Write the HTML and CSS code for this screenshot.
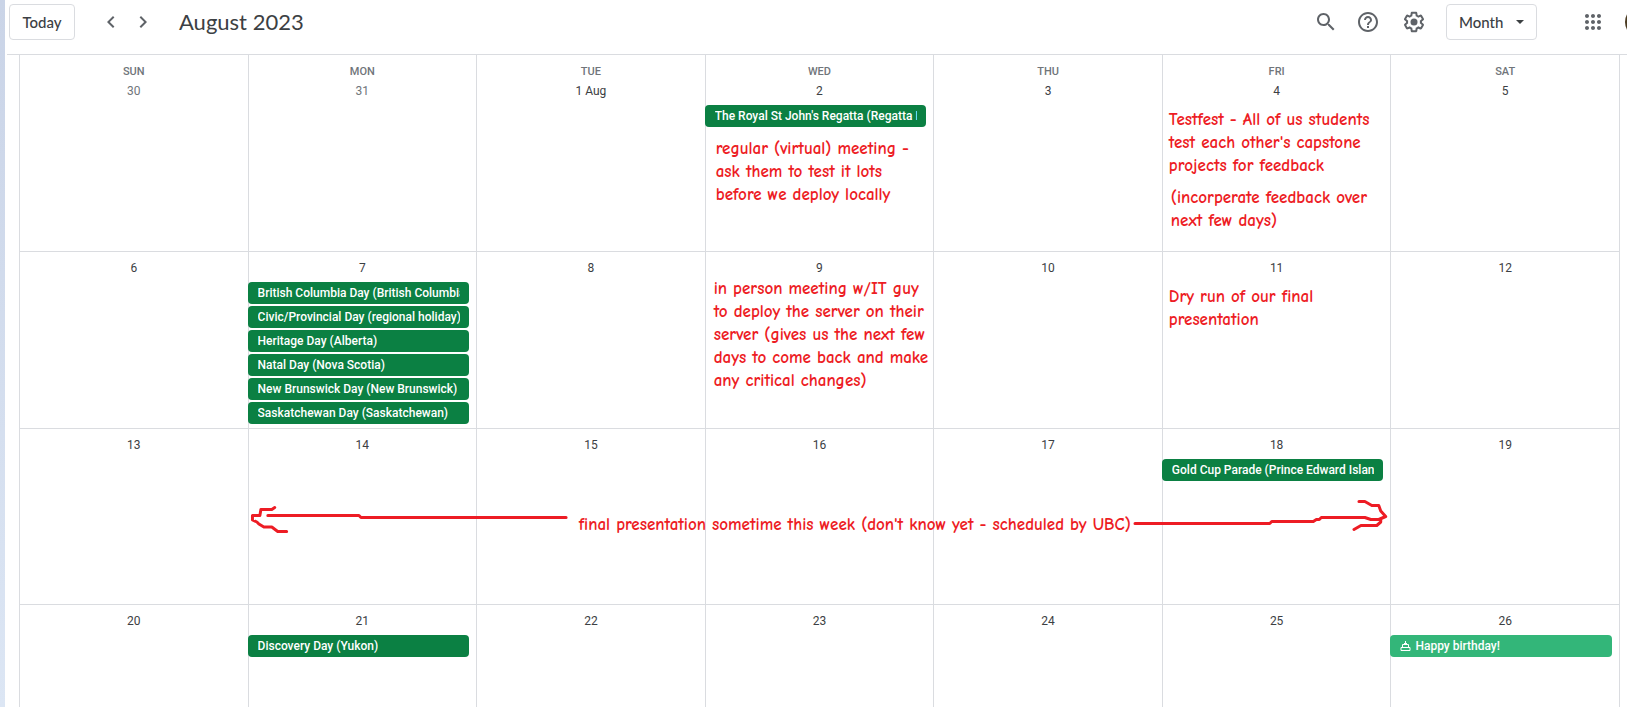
FILE: index.html
```
<!DOCTYPE html>
<html lang="en">
<head>
<meta charset="utf-8">
<title>August 2023</title>
<link rel="stylesheet" href="styles.css">
</head>
<body>
<div class="edge"></div>
<div class="app">
  <header class="toolbar">
    <button class="outlined today" type="button">Today</button>
    <nav class="pager">
      <button class="icon" type="button" aria-label="Previous month"><svg viewBox="0 0 24 24"><path d="M15.41 7.41 14 6l-6 6 6 6 1.41-1.41L10.83 12z"/></svg></button>
      <button class="icon" type="button" aria-label="Next month"><svg viewBox="0 0 24 24"><path d="M10 6 8.59 7.41 13.17 12l-4.58 4.59L10 18l6-6z"/></svg></button>
    </nav>
    <h1 class="title">August 2023</h1>
    <div class="tools">
      <div class="tool-icons">
      <button class="icon" type="button" aria-label="Search"><svg viewBox="0 0 24 24"><path d="M15.5 14h-.79l-.28-.27C15.41 12.59 16 11.11 16 9.5 16 5.91 13.09 3 9.5 3S3 5.91 3 9.5 5.91 16 9.5 16c1.61 0 3.09-.59 4.23-1.57l.27.28v.79l5 4.99L20.49 19l-4.99-5zm-6 0C7.01 14 5 11.99 5 9.5S7.01 5 9.5 5 14 7.01 14 9.5 11.99 14 9.5 14z"/></svg></button>
      <button class="icon" type="button" aria-label="Help"><svg viewBox="0 0 24 24"><path d="M11 18h2v-2h-2v2zm1-16C6.48 2 2 6.48 2 12s4.48 10 10 10 10-4.48 10-10S17.52 2 12 2zm0 18c-4.41 0-8-3.59-8-8s3.59-8 8-8 8 3.59 8 8-3.59 8-8 8zm0-14c-2.21 0-4 1.79-4 4h2c0-1.1.9-2 2-2s2 .9 2 2c0 2-3 1.75-3 5h2c0-2.25 3-2.5 3-5 0-2.21-1.79-4-4-4z"/></svg></button>
      </div>
      <button class="icon" type="button" aria-label="Settings"><svg viewBox="0 0 24 24"><path d="M13.85 22.25h-3.7c-.74 0-1.36-.54-1.45-1.27l-.27-1.89c-.27-.14-.53-.29-.79-.46l-1.8.72c-.7.26-1.47-.03-1.81-.65L2.2 15.53c-.35-.66-.2-1.44.36-1.88l1.53-1.19c-.01-.15-.02-.3-.02-.46 0-.15.01-.31.02-.46l-1.52-1.19c-.59-.45-.74-1.26-.37-1.88l1.85-3.19c.34-.62 1.11-.9 1.79-.63l1.81.73c.26-.17.52-.32.78-.46l.27-1.91c.09-.7.71-1.25 1.44-1.25h3.7c.74 0 1.36.54 1.45 1.27l.27 1.89c.27.14.53.29.79.46l1.8-.72c.71-.26 1.48.03 1.82.65l1.84 3.18c.36.66.2 1.44-.36 1.88l-1.52 1.19c.01.15.02.3.02.46s-.01.31-.02.46l1.52 1.19c.56.45.72 1.23.37 1.86l-1.86 3.22c-.34.62-1.11.9-1.8.63l-1.8-.72c-.26.17-.52.32-.78.46l-.27 1.91c-.1.68-.72 1.22-1.46 1.22zm-3.23-2h2.76l.37-2.55.53-.22c.44-.18.88-.44 1.34-.78l.45-.34 2.38.96 1.38-2.4-2.03-1.58.07-.56c.03-.26.06-.51.06-.78s-.03-.53-.06-.78l-.07-.56 2.03-1.58-1.39-2.4-2.39.96-.45-.35c-.42-.32-.87-.58-1.33-.77l-.52-.22-.37-2.55h-2.76l-.37 2.55-.53.21c-.44.19-.88.44-1.34.79l-.45.33-2.38-.95-1.39 2.39 2.03 1.58-.07.56a7 7 0 0 0-.06.79c0 .26.02.53.06.78l.07.56-2.03 1.58 1.38 2.4 2.39-.96.45.35c.43.33.86.58 1.33.77l.53.22z"/><circle cx="12" cy="12" r="3.5"/></svg></button>
      <button class="outlined view" type="button">Month<span class="caret"></span></button>
      <button class="icon apps" type="button" aria-label="Apps"><svg viewBox="0 0 24 24"><path d="M6 8c1.1 0 2-.9 2-2s-.9-2-2-2-2 .9-2 2 .9 2 2 2zm6 12c1.1 0 2-.9 2-2s-.9-2-2-2-2 .9-2 2 .9 2 2 2zm-6 0c1.1 0 2-.9 2-2s-.9-2-2-2-2 .9-2 2 .9 2 2 2zm0-6c1.1 0 2-.9 2-2s-.9-2-2-2-2 .9-2 2 .9 2 2 2zm6 0c1.1 0 2-.9 2-2s-.9-2-2-2-2 .9-2 2 .9 2 2 2zm4-8c0 1.1.9 2 2 2s2-.9 2-2-.9-2-2-2-2 .9-2 2zm-4 2c1.1 0 2-.9 2-2s-.9-2-2-2-2 .9-2 2 .9 2 2 2zm6 6c1.1 0 2-.9 2-2s-.9-2-2-2-2 .9-2 2 .9 2 2 2zm0 6c1.1 0 2-.9 2-2s-.9-2-2-2-2 .9-2 2 .9 2 2 2z"/></svg></button>
      <span class="avatar"></span>
    </div>
  </header>

  <main class="calendar">
    <section class="week first">
      <div class="day"><span class="weekday">SUN</span><span class="date outside">30</span></div>
      <div class="day"><span class="weekday">MON</span><span class="date outside">31</span></div>
      <div class="day"><span class="weekday">TUE</span><span class="date">1 Aug</span></div>
      <div class="day"><span class="weekday">WED</span><span class="date">2</span>
        <button class="event" type="button"><span class="label">The Royal St John's Regatta (Regatta Day)</span></button>
        <p class="note after-event">regular (virtual) meeting -<br>ask them to test it lots<br>before we deploy locally</p>
      </div>
      <div class="day"><span class="weekday">THU</span><span class="date">3</span></div>
      <div class="day"><span class="weekday">FRI</span><span class="date">4</span>
        <p class="note first-note">Testfest - All of us students<br>test each other's capstone<br>projects for feedback</p>
        <p class="note next-note">(incorperate feedback over<br>next few days)</p>
      </div>
      <div class="day"><span class="weekday">SAT</span><span class="date">5</span></div>
    </section>

    <section class="week">
      <div class="day"><span class="date">6</span></div>
      <div class="day"><span class="date">7</span>
        <button class="event" type="button"><span class="label">British Columbia Day (British Columbia)</span></button>
        <button class="event" type="button"><span class="label">Civic/Provincial Day (regional holiday)</span></button>
        <button class="event" type="button"><span class="label">Heritage Day (Alberta)</span></button>
        <button class="event" type="button"><span class="label">Natal Day (Nova Scotia)</span></button>
        <button class="event" type="button"><span class="label">New Brunswick Day (New Brunswick)</span></button>
        <button class="event" type="button"><span class="label">Saskatchewan Day (Saskatchewan)</span></button>
      </div>
      <div class="day"><span class="date">8</span></div>
      <div class="day"><span class="date">9</span>
        <p class="note">in person meeting w/IT guy<br>to deploy the server on their<br>server (gives us the next few<br>days to come back and make<br>any critical changes)</p>
      </div>
      <div class="day"><span class="date">10</span></div>
      <div class="day"><span class="date">11</span>
        <p class="note first-note">Dry run of our final<br>presentation</p>
      </div>
      <div class="day"><span class="date">12</span></div>
    </section>

    <section class="week third">
      <div class="day"><span class="date">13</span></div>
      <div class="day"><span class="date">14</span></div>
      <div class="day"><span class="date">15</span></div>
      <div class="day"><span class="date">16</span></div>
      <div class="day"><span class="date">17</span></div>
      <div class="day"><span class="date">18</span>
        <button class="event" type="button"><span class="label">Gold Cup Parade (Prince Edward Island)</span></button>
      </div>
      <div class="day"><span class="date">19</span></div>
      <div class="span-note">
        <svg class="arrow left" viewBox="0 0 326 36" preserveAspectRatio="none"><path d="M20 15.500H112L114 17.500H321M27 7.500 24 9.500H13L12 15.500H4.500V20L9 22 11 24 16 27H24L30 31.500H39"/></svg>
        <p class="note">final presentation sometime this week (don't know yet - scheduled by UBC)</p>
        <svg class="arrow right" viewBox="0 0 260 36" preserveAspectRatio="none"><path d="M2 23.500H138L140 21.500H182L185 19.500H188L190 17.500H234L240 19.500H248L255 16.500M228 1.500H234L241 5.500H248L250 11 255 16.500 250 19V22L246 25.500H230L223 29.500"/></svg>
      </div>
    </section>

    <section class="week">
      <div class="day"><span class="date">20</span></div>
      <div class="day"><span class="date">21</span>
        <button class="event" type="button"><span class="label">Discovery Day (Yukon)</span></button>
      </div>
      <div class="day"><span class="date">22</span></div>
      <div class="day"><span class="date">23</span></div>
      <div class="day"><span class="date">24</span></div>
      <div class="day"><span class="date">25</span></div>
      <div class="day"><span class="date">26</span>
        <button class="event birthday" type="button"><svg class="cake" viewBox="0 0 11 12"><path d="M5.500 1V4M4 3.500H7M2.500 7.500V4.500H8.500V7.500M1 10.500V7.500H10V10.500Z"/></svg><span class="label">Happy birthday!</span></button>
      </div>
    </section>
  </main>
</div>
</body>
</html>
```
FILE: styles.css
```
* { box-sizing: border-box; }

body {
  margin: 0;
  height: 100vh;
  display: flex;
  gap: 2px;
  overflow: hidden;
  background: #fff;
  color: #3c4043;
  font-family: Roboto, "Liberation Sans", sans-serif;
}

button { font: inherit; color: inherit; cursor: pointer; }

.edge {
  flex: 0 0 5px;
  background: linear-gradient(#cad4e7, #dce6f4);
}

.app { flex: 1; min-width: 0; }

/* Toolbar */
.toolbar {
  display: flex;
  align-items: center;
  height: 55px;
  padding: 0 0 10px 2px;
  border-bottom: 1px solid #dadce0;
  overflow: hidden;
}

.outlined {
  height: 36px;
  padding: 0 12px;
  border: 1px solid #dadce0;
  border-radius: 4px;
  background: #fff;
  font-family: Lato, sans-serif;
  font-size: 15px;
  font-weight: 500;
}

.today { width: 66px; }

.pager { display: flex; gap: 8px; margin-left: 24px; }

.icon {
  display: block;
  width: 24px;
  height: 24px;
  padding: 0;
  border: 0;
  background: none;
  color: #5f6368;
}

.icon svg { display: block; width: 24px; height: 24px; fill: currentColor; }

.title {
  margin: 0 0 0 24px;
  padding-bottom: 2px;
  font-family: Lato, sans-serif;
  font-size: 22px;
  font-weight: 400;
}

.tools {
  display: flex;
  align-items: center;
  gap: 20px;
  margin-left: auto;
  margin-right: -30px;
}

.tool-icons { display: flex; gap: 18px; margin-right: 2px; }

.view {
  display: flex;
  align-items: center;
  justify-content: space-between;
  width: 91px;
}

.caret {
  border: 4px solid transparent;
  border-top-color: #3c4043;
  border-bottom: 0;
}

.apps { margin-left: 24px; }

.avatar {
  width: 32px;
  height: 32px;
  border-radius: 50%;
  background: #4b3b22;
}

/* Month grid */
.calendar {
  margin: 0 7px 0 12px;
  border-right: 1px solid #dadce0;
}

.week {
  position: relative;
  display: grid;
  grid-template-columns: repeat(7, minmax(0, 1fr));
  min-height: 177px;
  border-top: 1px solid #dadce0;
}

.first { min-height: 196px; border-top: 0; }

.third { min-height: 176px; }

.day {
  display: flex;
  flex-direction: column;
  padding-top: 7px;
  border-left: 1px solid #dadce0;
}

.weekday {
  color: #70757a;
  font-size: 11px;
  font-weight: 500;
  line-height: 20px;
  text-align: center;
}

.date {
  margin-bottom: 5px;
  font-size: 12px;
  font-weight: 400;
  line-height: 18px;
  text-align: center;
}

.outside { color: #70757a; }

.event {
  display: flex;
  align-items: center;
  gap: 4px;
  height: 22px;
  margin: 0 7px 2px -1px;
  padding: 0 9px 0 10px;
  border: 0;
  border-radius: 4px;
  background: #0b8043;
  color: #fff;
  font-size: 12px;
  font-weight: 500;
  text-align: left;
}

.label { min-width: 0; overflow: hidden; white-space: nowrap; }

.birthday { background: #33b679; }

.cake { flex: none; width: 11px; height: 12px; fill: none; stroke: #fff; }

/* Handwritten notes */
.note {
  margin: -5px 0 0 8px;
  color: #ed1c24;
  font-family: "Comic Sans MS", "Comic Neue", Lato, sans-serif;
  font-size: 17px;
  font-weight: 700;
  line-height: 23px;
  white-space: nowrap;
}

.after-event { margin: 8px 0 0 10px; }

.first-note { margin: 3px 0 0 6px; }

.next-note { margin: 9px 0 0 8px; }

.span-note {
  position: absolute;
  top: 71px;
  left: calc(100% / 7);
  width: calc(500% / 7);
  display: flex;
  align-items: flex-end;
}

.span-note .note { margin: 0 2px 0 8px; }

.arrow {
  min-width: 0;
  height: 36px;
  fill: none;
  stroke: #ed1c24;
  stroke-width: 3;
  stroke-linecap: round;
  stroke-linejoin: round;
}

.left { flex: 326 1 0; }
.right { flex: 260 1 0; }
```
